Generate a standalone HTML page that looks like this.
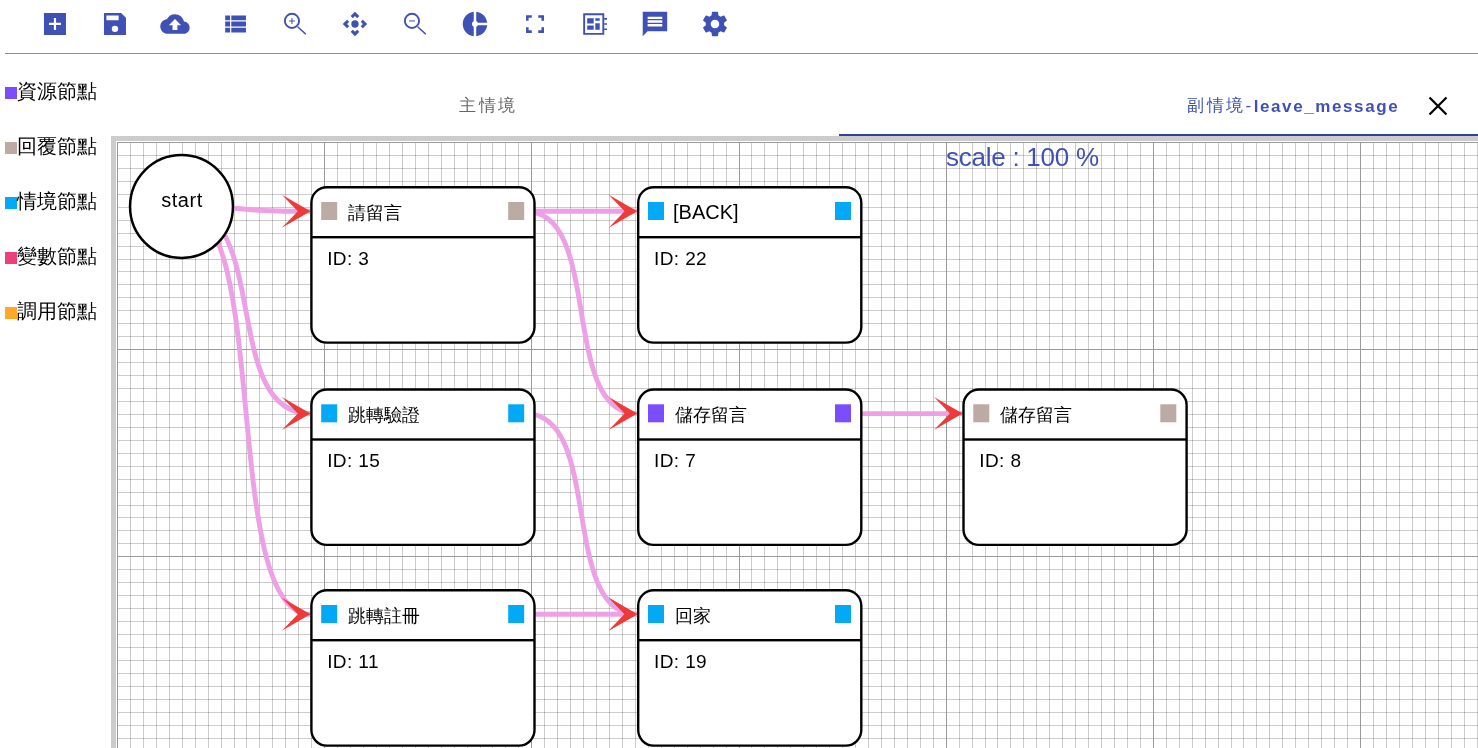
<!DOCTYPE html>
<html><head><meta charset="utf-8"><style>
html,body{margin:0;padding:0;width:1478px;height:748px;overflow:hidden;background:#fff;}
svg{position:absolute;left:0;top:0;display:block;will-change:transform}
text{font-family:"Liberation Sans",sans-serif;}
.nt{font-size:18px;fill:#000}
.nid{font-size:19px;fill:#000;letter-spacing:0.4px}
.st{font-size:20px;fill:#000;letter-spacing:0.5px}
.lg{font-size:19.5px;fill:#000}
.tab1{font-size:17px;fill:#666;letter-spacing:2.5px}
.tab2{font-size:17px;fill:#3f51b5;letter-spacing:2.5px}
.tab2b{font-weight:bold;letter-spacing:1.6px}
.scale{font-size:26px;fill:#3f51b5;letter-spacing:-0.25px}
</style></head><body>
<svg width="1478" height="748" viewBox="0 0 1478 748">
<g transform="translate(40.3 9.3) scale(1.2222)" fill="#3f51b5"><path d="M3 3h18v18H3zM12.9 7.1h-1.8v4H7.1v1.8h4v4h1.8v-4h4v-1.8h-4z" fill-rule="evenodd"/></g><g transform="translate(100.3 9.3) scale(1.2222)" fill="#3f51b5"><path d="M17 3H3v18h18V7l-4-4zm-2 6H5V5h10v4z" fill-rule="evenodd"/><circle cx="12" cy="16" r="2.6" fill="#fff"/></g><g transform="translate(160.3 9.3) scale(1.2222)" fill="#3f51b5"><path d="M19.35 10.04C18.67 6.59 15.64 4 12 4 9.11 4 6.6 5.64 5.35 8.04 2.34 8.36 0 10.91 0 14c0 3.31 2.69 6 6 6h13c2.76 0 5-2.24 5-5 0-2.64-2.05-4.78-4.65-4.96zM14 13v4h-4v-4H7l5-5 5 5h-3z"/></g><g transform="translate(220.3 9.3) scale(1.2222)" fill="#3f51b5"><path d="M4 14h4v-4H4v4zm0 5h4v-4H4v4zM4 9h4V5H4v4zm5 5h12v-4H9v4zm0 5h12v-4H9v4zM9 5v4h12V5H9z"/></g><g transform="translate(280.3 9.3) scale(1.2222)" fill="#3f51b5"><circle cx="9.55" cy="9.5" r="5.8" fill="none" stroke="#3f51b5" stroke-width="1.55"/><path d="M14.2 14.2L20.8 20.3" stroke="#3f51b5" stroke-width="1.15" fill="none"/><path d="M9.1 7.1h0.85v2.05h2v0.85h-2v2.05h-0.85v-2.05h-2v-0.85h2z"/></g><g transform="translate(340.3 9.3) scale(1.2222)" fill="#3f51b5"><path d="M15.54 5.54L13.77 7.3 12 5.54 10.23 7.3 8.46 5.54 12 2zm2.92 10l-1.76-1.77L18.46 12l-1.76-1.77 1.76-1.77L22 12zm-10 2.92l1.77-1.76L12 18.46l1.77-1.76 1.77 1.76L12 22zm-2.92-10l1.76 1.77L5.54 12l1.76 1.77-1.76 1.77L2 12z"/><circle cx="12" cy="12" r="3"/></g><g transform="translate(400.3 9.3) scale(1.2222)" fill="#3f51b5"><circle cx="9.55" cy="9.5" r="5.8" fill="none" stroke="#3f51b5" stroke-width="1.55"/><path d="M14.2 14.2L20.8 20.3" stroke="#3f51b5" stroke-width="1.15" fill="none"/><path d="M7.1 9.1h4.9v0.85H7.1z"/></g><g transform="translate(460.3 9.3) scale(1.2222)" fill="#3f51b5"><path d="M11 2v20c-5.07-.5-9-4.79-9-10s3.93-9.5 9-10zm2.03 0v8.99H22c-.47-4.74-4.24-8.52-8.97-8.99zm0 11.01V22c4.74-.47 8.5-4.25 8.97-8.99h-8.97z"/><circle cx="12" cy="12" r="2.4" fill="#fff"/></g><g transform="translate(520.3 9.3) scale(1.2222)" fill="#3f51b5"><path d="M4.7 4.8h4.7v2.1H6.8v2.5H4.7zM19.4 4.8v4.6h-2.1V6.9h-2.6V4.8zM4.7 19.3v-4.6h2.1v2.5h2.6v2.1zM19.4 19.3h-4.7v-2.1h2.6v-2.5h2.1z"/></g><g transform="translate(580.3 9.3) scale(1.2222)" fill="#3f51b5"><path d="M2.37 3.27h17.23v17.63H2.37zM3.92 4.82v14.53h14.13V4.82z" fill-rule="evenodd"/><path d="M5.65 7.36h5.32v4.34H5.65zM5.65 13.2h5.32v3.6H5.65zM12.27 7.36h3.63v2.04H12.27zM12.27 11.4h3.63v5.4H12.27zM19.5 7.2h2.35v1.3H19.5zM19.5 11.42h2.35v1.3H19.5zM19.5 15.65h2.35v1.3H19.5z"/></g><g transform="translate(640.3 9.3) scale(1.2222)" fill="#3f51b5"><path d="M22 2H2v20l4-4h16V2zm-4 12H6v-2h12v2zm0-3H6V9h12v2zm0-3H6V6h12v2z" fill-rule="evenodd"/></g><g transform="translate(700.3 9.3) scale(1.2222)" fill="#3f51b5"><path d="M19.43 12.98c.04-.32.07-.64.07-.98s-.03-.66-.07-.98l2.11-1.65c.19-.15.24-.42.12-.64l-2-3.46c-.12-.22-.39-.3-.61-.22l-2.49 1c-.52-.4-1.08-.73-1.69-.98l-.38-2.65C14.46 2.18 14.25 2 14 2h-4c-.25 0-.46.18-.49.42l-.38 2.650c-.61.25-1.17.59-1.69.98l-2.49-1c-.23-.09-.49 0-.61.22l-2 3.46c-.13.22-.07.49.12.64l2.11 1.65c-.04.32-.07.65-.07.98s.03.66.07.98l-2.11 1.65c-.19.15-.24.42-.12.64l2 3.46c.12.22.39.3.61.22l2.49-1c.52.4 1.08.73 1.69.98l.38 2.65c.03.24.24.42.49.42h4c.25 0 .46-.18.49-.42l.38-2.65c.61-.25 1.17-.59 1.69-.98l2.49 1c.23.09.49 0 .61-.22l2-3.46c.12-.22.07-.49-.12-.64l-2.11-1.65zM12 15.5c-1.930 0-3.5-1.57-3.5-3.5s1.57-3.5 3.5-3.5 3.5 1.57 3.5 3.5-1.57 3.5-3.5 3.5z"/></g>
<rect x="5" y="53" width="1473" height="1" fill="#8090b3"/>
<rect x="5" y="87" width="12" height="12" fill="#7c4dff"/><text x="17" y="98" class="lg">資源節點</text><rect x="5" y="142" width="12" height="12" fill="#bcaaa4"/><text x="17" y="153" class="lg">回覆節點</text><rect x="5" y="197" width="12" height="12" fill="#03a9f4"/><text x="17" y="208" class="lg">情境節點</text><rect x="5" y="252" width="12" height="12" fill="#ec407a"/><text x="17" y="263" class="lg">變數節點</text><rect x="5" y="307" width="12" height="12" fill="#ffa726"/><text x="17" y="318" class="lg">調用節點</text>
<text x="459" y="111" class="tab1">主情境</text>
<text x="1187" y="110.5" class="tab2">副情境-<tspan class="tab2b" dy="1">leave_message</tspan></text>
<path d="M1429.5 97.5L1446.5 114.5M1446.5 97.5L1429.5 114.5" stroke="#000" stroke-width="2.2"/>
<rect x="839" y="134" width="639" height="2" fill="#33439b"/>
<rect x="111" y="136" width="1367" height="612" fill="#cccccc"/>
<rect x="116" y="141" width="1362" height="607" fill="#fff"/>
<path d="M130.5 142V748M143.5 142V748M156.5 142V748M169.5 142V748M182.5 142V748M195.5 142V748M208.5 142V748M221.5 142V748M234.5 142V748M246.5 142V748M259.5 142V748M272.5 142V748M285.5 142V748M298.5 142V748M311.5 142V748M337.5 142V748M350.5 142V748M363.5 142V748M376.5 142V748M389.5 142V748M402.5 142V748M415.5 142V748M428.5 142V748M441.5 142V748M454.5 142V748M467.5 142V748M480.5 142V748M492.5 142V748M505.5 142V748M518.5 142V748M544.5 142V748M557.5 142V748M570.5 142V748M583.5 142V748M596.5 142V748M609.5 142V748M622.5 142V748M635.5 142V748M648.5 142V748M661.5 142V748M674.5 142V748M687.5 142V748M700.5 142V748M713.5 142V748M726.5 142V748M751.5 142V748M764.5 142V748M777.5 142V748M790.5 142V748M803.5 142V748M816.5 142V748M829.5 142V748M842.5 142V748M855.5 142V748M868.5 142V748M881.5 142V748M894.5 142V748M907.5 142V748M920.5 142V748M933.5 142V748M959.5 142V748M972.5 142V748M985.5 142V748M997.5 142V748M1010.5 142V748M1023.5 142V748M1036.5 142V748M1049.5 142V748M1062.5 142V748M1075.5 142V748M1088.5 142V748M1101.5 142V748M1114.5 142V748M1127.5 142V748M1140.5 142V748M1166.5 142V748M1179.5 142V748M1192.5 142V748M1205.5 142V748M1218.5 142V748M1231.5 142V748M1243.5 142V748M1256.5 142V748M1269.5 142V748M1282.5 142V748M1295.5 142V748M1308.5 142V748M1321.5 142V748M1334.5 142V748M1347.5 142V748M1373.5 142V748M1386.5 142V748M1399.5 142V748M1412.5 142V748M1425.5 142V748M1438.5 142V748M1451.5 142V748M1464.5 142V748M1477.5 142V748M117 155.5H1478M117 168.5H1478M117 181.5H1478M117 194.5H1478M117 207.5H1478M117 220.5H1478M117 233.5H1478M117 246.5H1478M117 259.5H1478M117 271.5H1478M117 284.5H1478M117 297.5H1478M117 310.5H1478M117 323.5H1478M117 336.5H1478M117 362.5H1478M117 375.5H1478M117 388.5H1478M117 401.5H1478M117 414.5H1478M117 427.5H1478M117 440.5H1478M117 453.5H1478M117 466.5H1478M117 479.5H1478M117 492.5H1478M117 505.5H1478M117 517.5H1478M117 530.5H1478M117 543.5H1478M117 569.5H1478M117 582.5H1478M117 595.5H1478M117 608.5H1478M117 621.5H1478M117 634.5H1478M117 647.5H1478M117 660.5H1478M117 673.5H1478M117 686.5H1478M117 699.5H1478M117 712.5H1478M117 725.5H1478M117 738.5H1478" stroke="#000" stroke-opacity="0.2" stroke-width="1" fill="none"/><path d="M117.5 142V748M324.5 142V748M531.5 142V748M739.5 142V748M946.5 142V748M1153.5 142V748M1360.5 142V748M117 142.5H1478M117 349.5H1478M117 556.5H1478" stroke="#9a9a9a" stroke-width="1" fill="none"/>
<text x="946" y="165.8" class="scale">scale : 100 %</text>
<g fill="none" stroke="#eda0e5" stroke-width="4.9"><path d="M181.5 207.3C271.6 207.3 220.1 211.3 310.2 211.3" /><path d="M181.5 207.3C271.6 207.3 220.1 413.6 310.2 413.6" /><path d="M181.5 207.3C271.6 207.3 220.1 614.3 310.2 614.3" /><path d="M525.7 211.3C603.6 211.3 559.1 211.3 637.0 211.3" /><path d="M525.7 211.3C603.6 211.3 559.1 413.6 637.0 413.6" /><path d="M525.7 413.6C603.6 413.6 559.1 614.3 637.0 614.3" /><path d="M852.5 413.6C929.4 413.6 885.4 413.6 962.3 413.6" /><path d="M525.7 614.3C603.6 614.3 559.1 614.3 637.0 614.3" /></g>
<g fill="#ef3a3a"><path d="M310.5 211.3L281.9 194.8L297.8 211.3L281.9 227.8Z"/><path d="M310.5 413.6L281.9 397.1L297.8 413.6L281.9 430.1Z"/><path d="M310.5 614.3L281.9 597.8L297.8 614.3L281.9 630.8Z"/><path d="M637.3 211.3L608.7 194.8L624.6 211.3L608.7 227.8Z"/><path d="M637.3 413.6L608.7 397.1L624.6 413.6L608.7 430.1Z"/><path d="M637.3 614.3L608.7 597.8L624.6 614.3L608.7 630.8Z"/><path d="M962.5999999999999 413.6L934.0 397.1L949.9 413.6L934.0 430.1Z"/><path d="M637.3 614.3L608.7 597.8L624.6 614.3L608.7 630.8Z"/></g>
<circle cx="181.5" cy="206.5" r="51.45" fill="#fff" stroke="#000" stroke-width="2.5"/><text x="182.0" y="206.8" class="st" text-anchor="middle">start</text>
<rect x="311.4" y="187.2" width="223.1" height="155.4" rx="15.5" ry="15.5" fill="#fff" stroke="#000" stroke-width="2.4"/><rect x="311.4" y="236" width="223.1" height="2.4" fill="#000"/><rect x="321.2" y="202" width="16" height="18" fill="#bcaaa4"/><rect x="508.2" y="202" width="16" height="18" fill="#bcaaa4"/><text x="348.2" y="219" class="nt">請留言</text><text x="327.2" y="264.7" class="nid">ID: 3</text><rect x="638.2" y="187.2" width="223.1" height="155.4" rx="15.5" ry="15.5" fill="#fff" stroke="#000" stroke-width="2.4"/><rect x="638.2" y="236" width="223.1" height="2.4" fill="#000"/><rect x="648" y="202" width="16" height="18" fill="#03a9f4"/><rect x="835" y="202" width="16" height="18" fill="#03a9f4"/><text x="673" y="219" class="nt" style="font-size:20px">[BACK]</text><text x="654" y="264.7" class="nid">ID: 22</text><rect x="311.4" y="389.5" width="223.1" height="155.4" rx="15.5" ry="15.5" fill="#fff" stroke="#000" stroke-width="2.4"/><rect x="311.4" y="438.3" width="223.1" height="2.4" fill="#000"/><rect x="321.2" y="404.3" width="16" height="18" fill="#03a9f4"/><rect x="508.2" y="404.3" width="16" height="18" fill="#03a9f4"/><text x="348.2" y="421.3" class="nt">跳轉驗證</text><text x="327.2" y="467.0" class="nid">ID: 15</text><rect x="638.2" y="389.5" width="223.1" height="155.4" rx="15.5" ry="15.5" fill="#fff" stroke="#000" stroke-width="2.4"/><rect x="638.2" y="438.3" width="223.1" height="2.4" fill="#000"/><rect x="648" y="404.3" width="16" height="18" fill="#7c4dff"/><rect x="835" y="404.3" width="16" height="18" fill="#7c4dff"/><text x="675" y="421.3" class="nt">儲存留言</text><text x="654" y="467.0" class="nid">ID: 7</text><rect x="963.5" y="389.5" width="223.1" height="155.4" rx="15.5" ry="15.5" fill="#fff" stroke="#000" stroke-width="2.4"/><rect x="963.5" y="438.3" width="223.1" height="2.4" fill="#000"/><rect x="973.3" y="404.3" width="16" height="18" fill="#bcaaa4"/><rect x="1160.3" y="404.3" width="16" height="18" fill="#bcaaa4"/><text x="1000.3" y="421.3" class="nt">儲存留言</text><text x="979.3" y="467.0" class="nid">ID: 8</text><rect x="311.4" y="590.2" width="223.1" height="155.4" rx="15.5" ry="15.5" fill="#fff" stroke="#000" stroke-width="2.4"/><rect x="311.4" y="639" width="223.1" height="2.4" fill="#000"/><rect x="321.2" y="605" width="16" height="18" fill="#03a9f4"/><rect x="508.2" y="605" width="16" height="18" fill="#03a9f4"/><text x="348.2" y="622" class="nt">跳轉註冊</text><text x="327.2" y="667.7" class="nid">ID: 11</text><rect x="638.2" y="590.2" width="223.1" height="155.4" rx="15.5" ry="15.5" fill="#fff" stroke="#000" stroke-width="2.4"/><rect x="638.2" y="639" width="223.1" height="2.4" fill="#000"/><rect x="648" y="605" width="16" height="18" fill="#03a9f4"/><rect x="835" y="605" width="16" height="18" fill="#03a9f4"/><text x="675" y="622" class="nt">回家</text><text x="654" y="667.7" class="nid">ID: 19</text>
</svg>
</body></html>
